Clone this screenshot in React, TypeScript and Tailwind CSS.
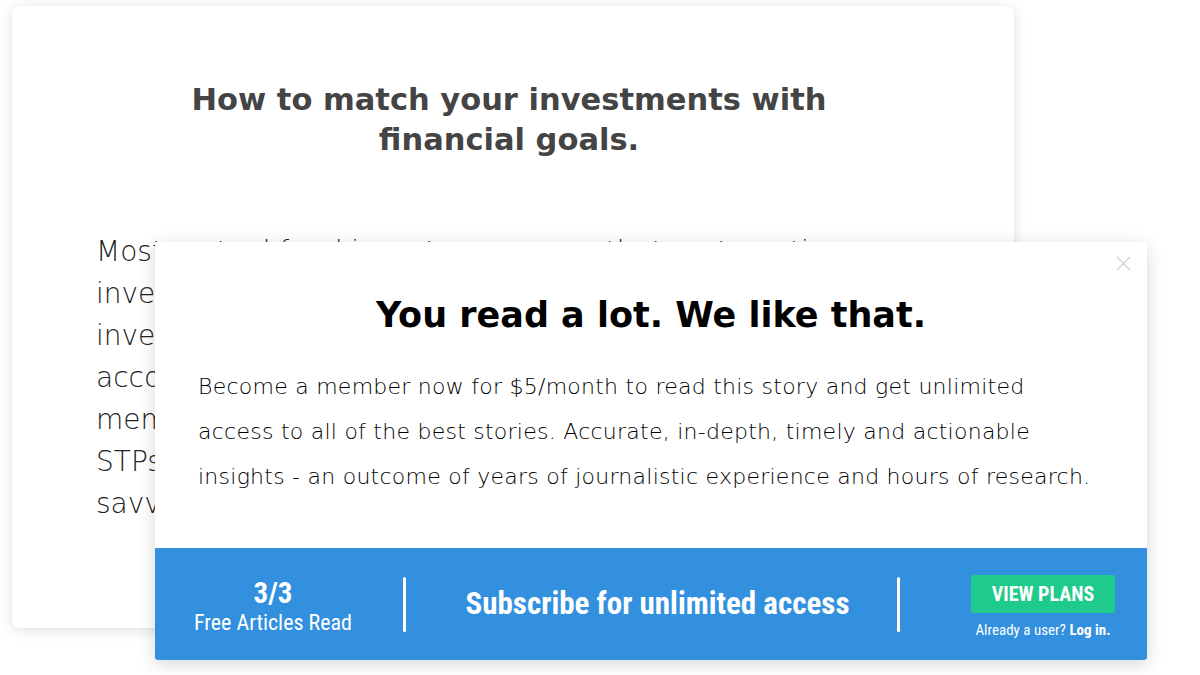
export default function App() {
  const body = "font-['DejaVu_Sans','Inter',sans-serif]"
  const cond = "font-['Roboto_Condensed','Roboto',sans-serif]"

  return (
    <div className="relative w-[1200px] h-[675px] overflow-hidden bg-white">
      {/* article card behind the paywall */}
      <div className="ml-[12px] mt-[6px] w-[1002px] h-[622px] rounded-lg bg-white shadow-[0_2px_14px_rgba(0,0,0,0.13)] pt-[74px]">
        <h1 className={`${body} mx-auto w-[760px] pr-[8px] text-center text-[30.5px] leading-[40px] font-bold text-[#444]`}>
          How to match your investments with
          <br />
          financial goals.
        </h1>
        <div className={`${body} mt-[71px] pl-[84px] text-[28px] leading-[42px] font-extralight text-[#222]`}>
          <div>Most mutual fund investors assume that systematic</div>
          <div>investment plans are the only way to invest. But</div>
          <div>investors can also use lumpsum investments</div>
          <div>according to their goals. Many experienced</div>
          <div>members also rely on systematic transfer plans</div>
          <div>STPs and withdrawal plans to become truly</div>
          <div>savvy and disciplined investors over time.</div>
        </div>
      </div>

      {/* paywall modal */}
      <div className="absolute left-[155px] top-[242px] flex w-[992px] h-[418px] flex-col overflow-hidden rounded-b-[3px] bg-white shadow-[0_4px_18px_rgba(0,0,0,0.16)]">
        <button className="absolute right-[16px] top-[14px] text-[#cfcfcf]">
          <svg width="15" height="15" viewBox="0 0 15 15" fill="none" stroke="currentColor" strokeWidth="1.3">
            <path d="M1 1L14 14M14 1L1 14" />
          </svg>
        </button>
        <div className="flex-1 pt-[50px]">
          <h2 className={`${body} text-center text-[35px] leading-[46px] font-bold text-black`}>
            You read a lot. We like that.
          </h2>
          <p className={`${body} mt-[26px] pl-[43px] whitespace-nowrap text-[22px] leading-[45px] tracking-[0.25px] font-extralight text-black`}>
            Become a member now for $5/month to read this story and get unlimited
            <br />
            access to all of the best stories. Accurate, in-depth, timely and actionable
            <br />
            insights - an outcome of years of journalistic experience and hours of research.
          </p>
        </div>
        <div className={`${cond} flex h-[112px] items-center bg-[#3290df] text-white`}>
          <div className="flex w-[236px] flex-col items-center pt-[5px]">
            <div className="text-[29px] leading-[32px] font-bold">3/3</div>
            <div className="text-[22px] leading-[28px]">Free Articles Read</div>
          </div>
          <div className="ml-[12px] h-[55px] w-[3px] rounded-full bg-white" />
          <div className="w-[491px] pl-[12px] text-center text-[31px] font-bold">
            Subscribe for unlimited access
          </div>
          <div className="h-[55px] w-[3px] rounded-full bg-white" />
          <div className="ml-[71px] flex w-[144px] flex-col items-center pt-[6px]">
            <button className="h-[38px] w-[144px] rounded-[2px] bg-[#1fcb8b] text-[20px] font-bold">
              VIEW PLANS
            </button>
            <div className="mt-[8px] whitespace-nowrap text-[15px] leading-[18px]">
              Already a user? <span className="font-bold">Log in.</span>
            </div>
          </div>
        </div>
      </div>
    </div>
  )
}
